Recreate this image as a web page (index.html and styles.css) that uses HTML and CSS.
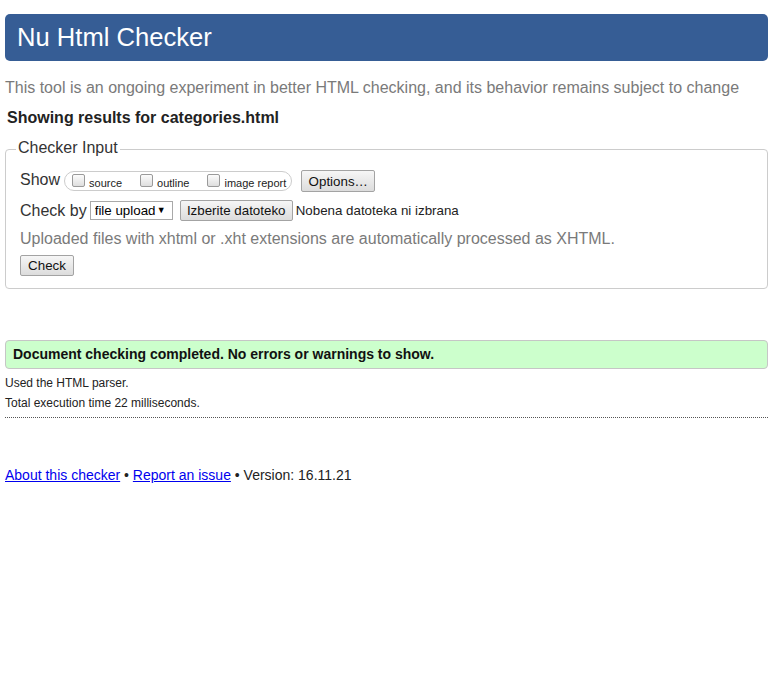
FILE: index.html
```html
<!DOCTYPE html>
<html lang="en">
<head>
<meta charset="utf-8">
<title>Nu Html Checker</title>
<link rel="stylesheet" href="styles.css">
</head>
<body>
<div class="page">
  <h1 class="title">Nu Html Checker</h1>
  <p class="intro">This tool is an ongoing experiment in better HTML checking, and its behavior remains subject to change</p>
  <p class="showing">Showing results for categories.html</p>
  <form class="checker">
    <fieldset class="fs">
      <legend class="legend">Checker Input</legend>
      <div class="row row-show">
        <span class="lbl">Show</span>
        <span class="pill">
          <label class="cb"><input type="checkbox" class="box"><span>source</span></label>
          <label class="cb"><input type="checkbox" class="box"><span>outline</span></label>
          <label class="cb"><input type="checkbox" class="box"><span>image report</span></label>
        </span>
        <button type="button" class="btn btn-options">Options…</button>
      </div>
      <div class="row row-by">
        <span class="lbl">Check by</span>
        <span class="selwrap"><select class="sel"><option>file upload</option></select></span>
        <button type="button" class="btn btn-file">Izberite datoteko</button>
        <span class="nofile">Nobena datoteka ni izbrana</span>
      </div>
      <p class="hint">Uploaded files with xhtml or .xht extensions are automatically processed as XHTML.</p>
      <div class="row row-check">
        <button type="button" class="btn btn-check">Check</button>
      </div>
    </fieldset>
  </form>
  <p class="success">Document checking completed. No errors or warnings to show.</p>
  <p class="meta">Used the HTML parser.</p>
  <p class="meta">Total execution time 22 milliseconds.</p>
  <hr class="sep">
  <p class="footer"><a href="#">About this checker</a> • <a href="#">Report an issue</a> • Version: 16.11.21</p>
</div>
</body>
</html>
```
FILE: styles.css
```css
html, body {
  margin: 0;
  padding: 0;
  background: #fff;
}
body {
  font-family: "Liberation Sans", Arial, sans-serif;
  color: #222;
}
.page {
  padding: 14px 9px 0 5px;
}
.title {
  margin: 0;
  height: 47px;
  line-height: 47px;
  background: #365d95;
  color: #fff;
  border-radius: 5px;
  font-size: 25.6px;
  font-weight: normal;
  padding-left: 12px;
}
.intro {
  margin: 17px 0 0 0;
  font-size: 16px;
  line-height: 20px;
  color: #7a7a7a;
  white-space: nowrap;
}
.showing {
  margin: 10px 0 0 2px;
  font-size: 16px;
  line-height: 20px;
  font-weight: bold;
  color: #222;
}
.checker {
  margin: 11px 0 0 0;
}
.fs {
  margin: 0;
  border: 1px solid #ccc;
  border-radius: 4px;
  padding: 10px 13px 12px 14px;
  min-width: 0;
}
.legend {
  font-size: 16px;
  line-height: 18px;
  padding: 0 2px 3px 2px;
  margin-left: -4px;
  color: #333;
}
.row {
  display: flex;
  align-items: center;
  font-size: 16px;
}
.row-show {
  height: 22px;
}
.row-by {
  height: 21px;
  margin-top: 8px;
}
.row-check {
  margin-top: 6px;
  height: 21px;
}
.lbl {
  line-height: 20px;
  color: #333;
}
.row-show .lbl {
  position: relative;
  top: -1px;
}
.pill {
  display: inline-flex;
  align-items: center;
  height: 18px;
  border: 1px solid #ccc;
  border-radius: 10px;
  padding: 0 5px 0 7px;
  margin-left: 4px;
  gap: 18px;
}
.cb {
  display: inline-flex;
  align-items: center;
  font-size: 11px;
  line-height: 14px;
  color: #222;
  gap: 4px;
}
.cb span {
  position: relative;
  top: 2px;
}
.box {
  -webkit-appearance: none;
  appearance: none;
  margin: 0;
  width: 13px;
  height: 13px;
  border: 1px solid #9a9a9a;
  border-radius: 2px;
  background: linear-gradient(#fcfcfc, #dedede);
  position: relative;
  top: -1px;
}
.btn {
  font-family: "Liberation Sans", Arial, sans-serif;
  font-size: 13.333px;
  color: #111;
  background: linear-gradient(#f6f6f6, #dcdcdc);
  border: 1px solid #a3a3a3;
  border-radius: 2px;
  padding: 0 6px;
  height: 21px;
  line-height: 19px;
  margin: 0;
}
.btn-options {
  margin-left: 9px;
  height: 22px;
  width: 74px;
  padding: 0;
}
.btn-file {
  margin-left: 7px;
  width: 113px;
  padding: 0;
}
.btn-check {
  width: 54px;
  padding: 0;
}
.selwrap {
  position: relative;
  display: inline-block;
  margin-left: 3px;
  height: 19px;
}
.selwrap::after {
  content: "▼";
  position: absolute;
  right: 7px;
  top: 4px;
  font-size: 9px;
  line-height: 10px;
  color: #000;
  pointer-events: none;
}
.sel {
  -webkit-appearance: none;
  appearance: none;
  font-family: "Liberation Sans", Arial, sans-serif;
  font-size: 13.333px;
  color: #000;
  background: #fff;
  border: 1px solid #a9a9a9;
  border-radius: 0;
  width: 83px;
  height: 19px;
  padding: 0 0 0 4px;
  margin: 0;
  line-height: 17px;
}
.nofile {
  font-size: 13.333px;
  margin-left: 3px;
  color: #222;
}
.hint {
  margin: 8px 0 0 0;
  font-size: 16px;
  line-height: 20px;
  color: #7a7a7a;
}
.success {
  margin: 51px 0 0 0;
  background: #ccffcc;
  border: 1px solid #c6c6c6;
  border-radius: 4px;
  padding: 5px 7px;
  font-size: 14px;
  line-height: 17px;
  font-weight: bold;
  color: #111;
}
.meta {
  margin: 0;
  font-size: 12px;
  line-height: 20px;
  color: #222;
}
.success + .meta {
  margin-top: 4px;
}
.sep {
  margin: 4px 0 0 0;
  border: 0;
  border-top: 1px dotted #555;
  height: 0;
}
.footer {
  margin: 47px 0 0 0;
  font-size: 14px;
  line-height: 20px;
  color: #222;
}
.footer a {
  color: #0000ee;
  text-decoration: underline;
}
```
